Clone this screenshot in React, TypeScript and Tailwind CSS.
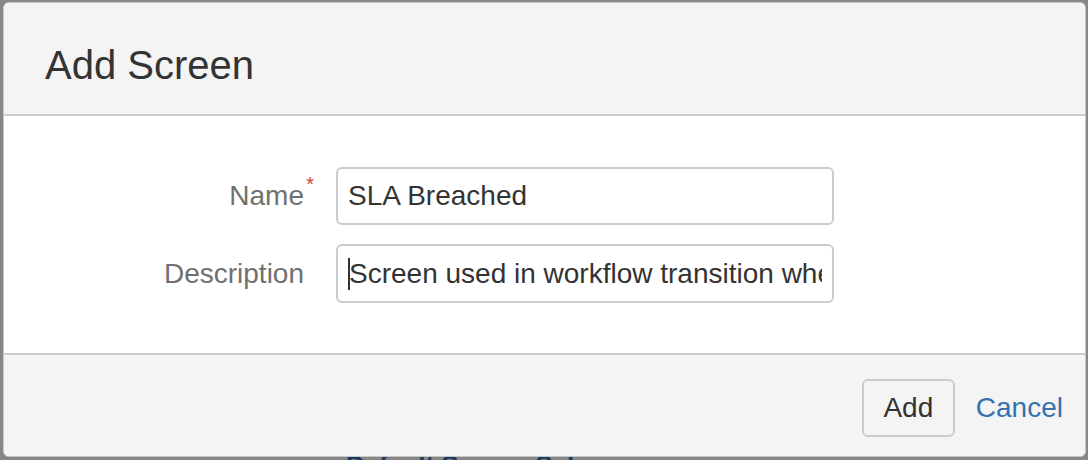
import React from "react";

export default function App() {
  const font = { fontFamily: '"Liberation Sans", Arial, sans-serif' };
  return (
    <div
      className="relative w-[1088px] h-[460px] overflow-hidden bg-[#878787] pl-[3px] pt-[2px]"
      style={font}
    >
      <div className="absolute left-[346px] top-[452px] text-[26px] font-bold text-[#1c3a5e] leading-none whitespace-nowrap">
        Default Screen Scheme
      </div>
      <div className="relative w-[1083px] h-[455px] rounded-[6px] border border-[#c8c8c8] overflow-hidden flex flex-col bg-white">
        <div className="h-[111px] bg-[#f4f4f4] pl-[41px] pt-[42px]">
          <h1 className="text-[40px] leading-[40px] text-[#333333]">Add Screen</h1>
        </div>
        <div className="h-[2px] bg-[#cccccc]" />
        <div className="h-[237px] bg-white pt-[51px] flex flex-col gap-[19px]">
          <div className="flex items-center">
            <div className="w-[300px] flex justify-end">
              <span className="relative text-[28px] text-[#707070]">
                Name
                <span className="absolute -right-[10px] -top-[6px] text-[20px] text-[#d04437]">*</span>
              </span>
            </div>
            <div className="ml-[32px] w-[498px] h-[58px] border-2 border-[#cccccc] rounded-[6px] flex items-center pl-[10px] text-[28px] text-[#333333]">
              SLA Breached
            </div>
          </div>
          <div className="flex items-center">
            <div className="w-[300px] flex justify-end">
              <span className="text-[28px] text-[#707070]">Description</span>
            </div>
            <div className="ml-[32px] w-[498px] h-[59px] border-2 border-[#cccccc] rounded-[6px] flex items-center pl-[10px] pr-[10px] text-[28px] text-[#333333] overflow-hidden whitespace-nowrap">
              <span className="inline-block w-[2px] h-[32px] bg-[#333333] shrink-0 -mr-[1px]" />
              <span className="overflow-hidden">Screen used in workflow transition when SLA is breached</span>
            </div>
          </div>
        </div>
        <div className="h-[2px] bg-[#cccccc]" />
        <div className="flex-1 bg-[#f4f4f4] flex items-start justify-end pt-[24px] pr-[22px]">
          <button className="w-[93px] h-[58px] border-2 border-[#cccccc] rounded-[6px] bg-[#f4f4f4] text-[28px] text-[#333333]">
            Add
          </button>
          <span className="ml-[21px] h-[58px] flex items-center text-[28px] text-[#3572b0]">Cancel</span>
        </div>
      </div>
    </div>
  );
}
